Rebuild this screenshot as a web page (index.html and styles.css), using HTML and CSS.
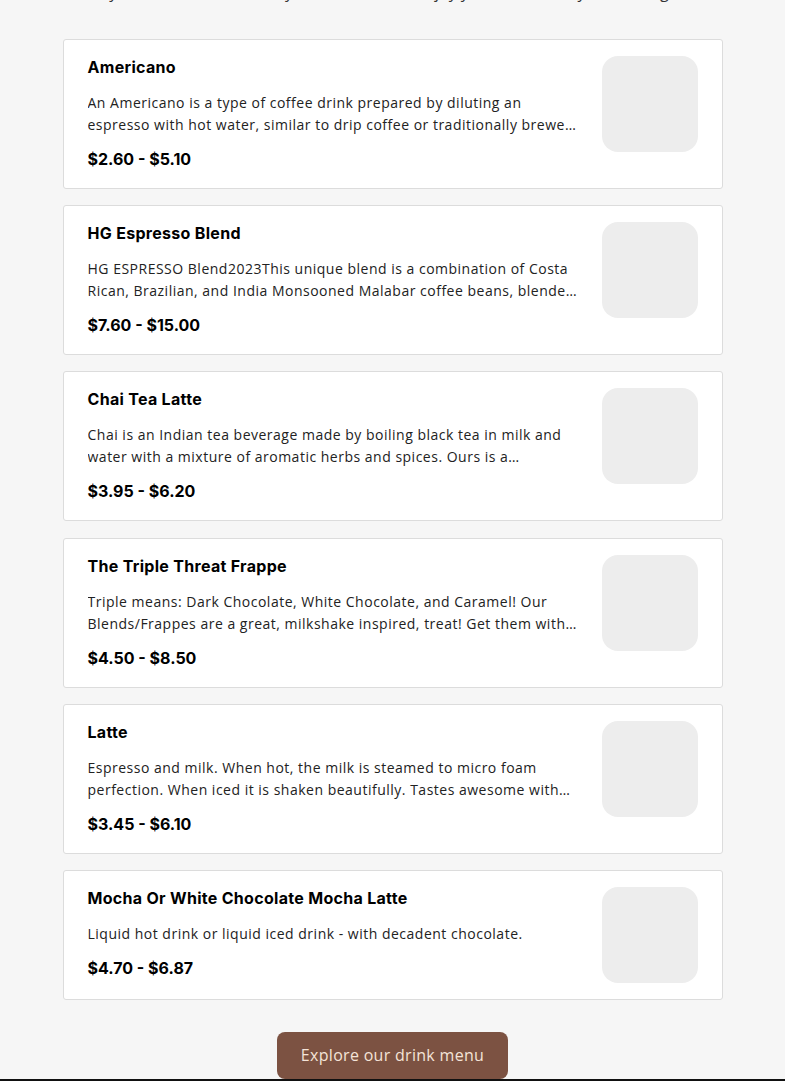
FILE: index.html
```html
<!DOCTYPE html>
<html lang="en">
<head>
<meta charset="utf-8">
<title>Drinks</title>
<link rel="stylesheet" href="styles.css">
</head>
<body>
<section class="menu">
  <p class="intro">Every drink is handcrafted by our baristas, so enjoy your visit and try something new.</p>
  <div class="list">
    <article class="card">
      <div class="info">
        <h3 class="title">Americano</h3>
        <p class="desc">An Americano is a type of coffee drink prepared by diluting an espresso with hot water, similar to drip coffee or traditionally brewed coffee but with a different flavor.</p>
        <p class="price">$2.60 - $5.10</p>
      </div>
      <div class="thumb"></div>
    </article>
    <article class="card">
      <div class="info">
        <h3 class="title">HG Espresso Blend</h3>
        <p class="desc">HG ESPRESSO Blend2023This unique blend is a combination of Costa Rican, Brazilian, and India Monsooned Malabar coffee beans, blended to perfection.</p>
        <p class="price">$7.60 - $15.00</p>
      </div>
      <div class="thumb"></div>
    </article>
    <article class="card">
      <div class="info">
        <h3 class="title">Chai Tea Latte</h3>
        <p class="desc">Chai is an Indian tea beverage made by boiling black tea in milk and water with a mixture of aromatic herbs and spices. Ours is a traditionally-spiced masala blend.</p>
        <p class="price">$3.95 - $6.20</p>
      </div>
      <div class="thumb"></div>
    </article>
    <article class="card">
      <div class="info">
        <h3 class="title">The Triple Threat Frappe</h3>
        <p class="desc">Triple means: Dark Chocolate, White Chocolate, and Caramel! Our Blends/Frappes are a great, milkshake inspired, treat! Get them with whipped cream.</p>
        <p class="price">$4.50 - $8.50</p>
      </div>
      <div class="thumb"></div>
    </article>
    <article class="card">
      <div class="info">
        <h3 class="title">Latte</h3>
        <p class="desc">Espresso and milk. When hot, the milk is steamed to micro foam perfection. When iced it is shaken beautifully. Tastes awesome with any flavor.</p>
        <p class="price">$3.45 - $6.10</p>
      </div>
      <div class="thumb"></div>
    </article>
    <article class="card">
      <div class="info">
        <h3 class="title">Mocha Or White Chocolate Mocha Latte</h3>
        <p class="desc">Liquid hot drink or liquid iced drink - with decadent chocolate.</p>
        <p class="price">$4.70 - $6.87</p>
      </div>
      <div class="thumb"></div>
    </article>
  </div>
  <div class="actions">
    <a class="btn" href="#">Explore our drink menu</a>
  </div>
</section>
<footer class="footer"></footer>
</body>
</html>
```

FILE: styles.css
```css
html, body {
  margin: 0;
  padding: 0;
  background: #f6f6f6;
  font-family: "Open Sans", "Noto Sans", sans-serif;
  color: #111;
}

.menu {
  display: flex;
  flex-direction: column;
  align-items: center;
}

.intro {
  margin: -20px 0 0;
  font-size: 16px;
  line-height: 24px;
  color: #333;
  text-align: center;
  height: 59px;
}

.list {
  width: 660px;
  display: flex;
  flex-direction: column;
  gap: 16.2px;
}

.card {
  display: flex;
  gap: 20px;
  padding: 16px 24px;
  background: #fff;
  border: 1px solid #dcdcdc;
  border-radius: 3px;
}

.info {
  flex: 1;
  min-width: 0;
}

.title {
  margin: 0 0 13px;
  font-family: Inter, "Liberation Sans", sans-serif;
  font-weight: 700;
  font-size: 16px;
  line-height: 23px;
  letter-spacing: 0.3px;
  color: #000;
}

.desc {
  margin: 0 0 12px;
  font-size: 14px;
  line-height: 22px;
  letter-spacing: 0.5px;
  color: #222;
  display: -webkit-box;
  -webkit-line-clamp: 2;
  -webkit-box-orient: vertical;
  overflow: hidden;
}

.price {
  margin: 0;
  padding-bottom: 1px;
  font-family: Inter, "Liberation Sans", sans-serif;
  font-weight: 700;
  font-size: 16px;
  line-height: 23px;
  color: #000;
}

.thumb {
  flex: 0 0 96px;
  width: 96px;
  height: 96px;
  border-radius: 16px;
  background: #ededed;
}

.actions {
  margin-top: 32px;
  display: flex;
  justify-content: center;
}

.btn {
  display: block;
  padding: 12px 24px;
  background: #7c5242;
  color: #f4e4d8;
  border-radius: 8px;
  text-decoration: none;
  font-size: 16px;
  line-height: 23px;
  letter-spacing: 0.3px;
}

.footer {
  height: 40px;
  background: #111;
}
```
